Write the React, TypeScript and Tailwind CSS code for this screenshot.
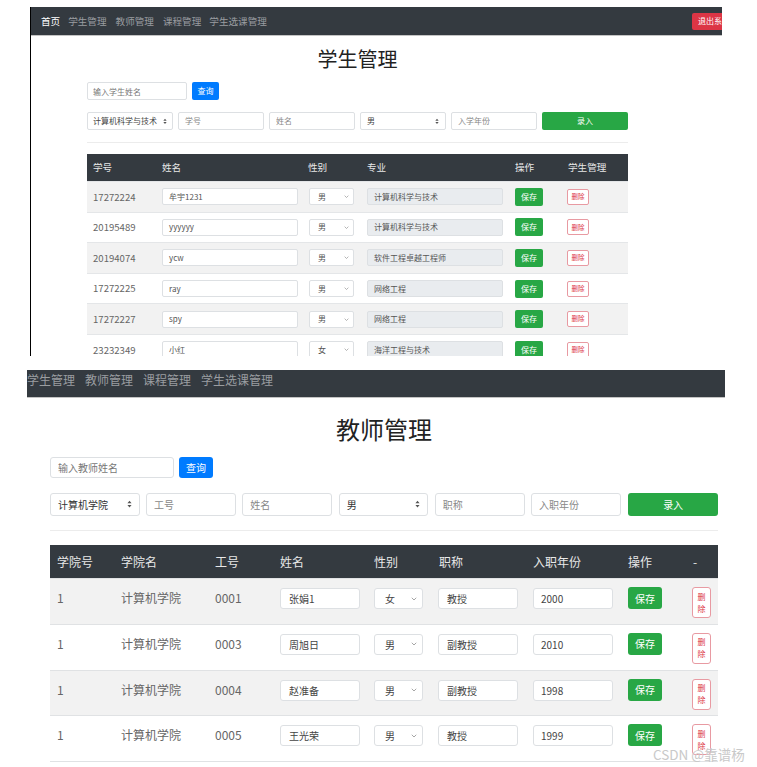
import React from 'react';

const students = [
    ['17272224', '牟宇1231', '男', '计算机科学与技术'],
    ['20195489', 'yyyyyy', '男', '计算机科学与技术'],
    ['20194074', 'ycw', '男', '软件工程卓越工程师'],
    ['17272225', 'ray', '男', '网络工程'],
    ['17272227', 'spy', '男', '网络工程'],
    ['23232349', '小红', '女', '海洋工程与技术'],
];

const teachers = [
    ['1', '计算机学院', '0001', '张娟1', '女', '教授', '2000'],
    ['1', '计算机学院', '0003', '周旭日', '男', '副教授', '2010'],
    ['1', '计算机学院', '0004', '赵准备', '男', '副教授', '1998'],
    ['1', '计算机学院', '0005', '王光荣', '男', '教授', '1999'],
];

function Chevron({ className }: { className?: string }) {
    return (
        <svg viewBox="0 0 8 5" className={className}>
            <path d="M1 1l3 3 3-3" fill="none" stroke="currentColor" strokeWidth="1" />
        </svg>
    );
}

function UpDown({ className }: { className?: string }) {
    return (
        <svg viewBox="0 0 6 10" className={className}>
            <path d="M3 1L5.5 4h-5zM3 9L0.5 6h5z" fill="currentColor" />
        </svg>
    );
}

function StudentPanel() {
    return (
        <div className="ml-[30px] mt-[7px] h-[349px] w-[692px] overflow-hidden border-l-[1.5px] border-black bg-white">
            {/* navbar */}
            <div className="flex h-[29px] items-center border-b border-[#c4c4c4] bg-[#343a40] pl-[10px] text-[9.6px]">
                <span className="text-white">首页</span>
                <span className="ml-[8px] text-[#9a9da0]">学生管理</span>
                <span className="ml-[9px] text-[#9a9da0]">教师管理</span>
                <span className="ml-[9px] text-[#9a9da0]">课程管理</span>
                <span className="ml-[8px] text-[#9a9da0]">学生选课管理</span>
                <div className="ml-auto mr-[-14px] flex h-[17px] shrink-0 items-center rounded-[2px] bg-[#dc3545] px-[6px] text-[8px] text-white">
                    退出系统
                </div>
            </div>

            <div className="ml-[56px] w-[541px]">
                <h1 className="mt-[9px] h-[28px] text-center text-[20px] leading-[28px] text-[#222]">学生管理</h1>

                <div className="mt-[9px] flex h-[18px] gap-[5px]">
                    <input
                        readOnly
                        placeholder="输入学生姓名"
                        className="h-full w-[100px] rounded-[2px] border border-[#dde0e3] px-[5px] text-[8px] outline-none placeholder:text-[#777]"
                    />
                    <div className="flex w-[27px] items-center justify-center rounded-[2px] bg-[#007bff] text-[8px] text-white">查询</div>
                </div>

                <div className="mt-[12px] flex h-[18px] gap-[5px] text-[8px]">
                    <div className="flex w-[86px] items-center rounded-[2px] border border-[#dde0e3] px-[5px] text-[#444]">
                        <span>计算机科学与技术</span>
                        <UpDown className="ml-auto w-[4px] text-[#555]" />
                    </div>
                    <input readOnly placeholder="学号" className="w-[86px] rounded-[2px] border border-[#dde0e3] px-[6px] outline-none placeholder:text-[#888]" />
                    <input readOnly placeholder="姓名" className="w-[86px] rounded-[2px] border border-[#dde0e3] px-[6px] outline-none placeholder:text-[#888]" />
                    <div className="flex w-[86px] items-center rounded-[2px] border border-[#dde0e3] px-[6px] text-[#444]">
                        <span>男</span>
                        <UpDown className="ml-auto w-[4px] text-[#555]" />
                    </div>
                    <input readOnly placeholder="入学年份" className="w-[86px] rounded-[2px] border border-[#dde0e3] px-[6px] outline-none placeholder:text-[#888]" />
                    <div className="flex w-[86px] items-center justify-center rounded-[2px] bg-[#28a745] text-white">录入</div>
                </div>

                <div className="mt-[12px] h-px bg-[#ececec]" />

                <div className="mt-[11px] text-[9.6px]">
                    <div className="grid h-[27px] grid-cols-[69px_146px_59px_148px_53px_66px] items-center bg-[#343a40] text-[#e8e8e8]">
                        <span className="pl-[6px]">学号</span>
                        <span className="pl-[6px]">姓名</span>
                        <span className="pl-[6px]">性别</span>
                        <span className="pl-[6px]">专业</span>
                        <span className="pl-[6px]">操作</span>
                        <span className="pl-[6px]">学生管理</span>
                    </div>
                    {students.map((s, i) => (
                        <div
                            key={s[0]}
                            className={`grid h-[30.6px] grid-cols-[69px_146px_59px_148px_53px_66px] items-center border-t border-[#e4e6e8] ${i % 2 === 0 ? 'bg-[#f2f2f2]' : 'bg-white'}`}
                        >
                            <span className="pl-[6px] text-[#666]">{s[0]}</span>
                            <div className="pl-[6px]">
                                <div className="flex h-[17px] w-[136px] items-center rounded-[2px] border border-[#dde0e3] bg-white px-[6px] text-[8px] text-[#555]">{s[1]}</div>
                            </div>
                            <div className="pl-[7px]">
                                <div className="flex h-[17px] w-[45px] items-center rounded-[2px] border border-[#dde0e3] bg-white pl-[8px] pr-[4px] text-[8px] text-[#555]">
                                    <span>{s[2]}</span>
                                    <Chevron className="ml-auto w-[5px] text-[#888]" />
                                </div>
                            </div>
                            <div className="pl-[6px]">
                                <div className="flex h-[17px] w-[136px] items-center rounded-[2px] border border-[#dde0e3] bg-[#e9ecef] px-[6px] text-[8px] text-[#555]">{s[3]}</div>
                            </div>
                            <div className="pl-[6px]">
                                <div className="flex h-[18px] w-[28px] items-center justify-center rounded-[2px] bg-[#28a745] text-[8px] text-white">保存</div>
                            </div>
                            <div className="pl-[5px]">
                                <div className="flex h-[16px] w-[22px] items-center justify-center rounded-[2px] border border-[#e89aa2] bg-white text-[6.5px] text-[#dc3545]">删除</div>
                            </div>
                        </div>
                    ))}
                </div>
            </div>
        </div>
    );
}

function TeacherPanel() {
    const cols = 'grid-cols-[64px_94px_65px_94px_65px_94px_95px_65px_32px]';
    return (
        <div className="ml-[27px] mt-[14px] h-[397px] w-[698px] overflow-hidden bg-white">
            <div className="flex h-[28px] items-start border-b border-[#c4c4c4] bg-[#343a40] pt-[1px] text-[12px] text-[#9a9da0]">
                <span>学生管理</span>
                <span className="ml-[10px]">教师管理</span>
                <span className="ml-[10px]">课程管理</span>
                <span className="ml-[10px]">学生选课管理</span>
            </div>

            <div className="ml-[23px] w-[668px]">
                <h1 className="mt-[15px] h-[32px] text-center text-[24px] leading-[32px] text-[#222]">教师管理</h1>

                <div className="mt-[12px] flex h-[21px] gap-[5px] text-[10px]">
                    <input
                        readOnly
                        placeholder="输入教师姓名"
                        className="h-full w-[124px] rounded-[3px] border border-[#dde0e3] px-[7px] outline-none placeholder:text-[#777]"
                    />
                    <div className="flex w-[34px] items-center justify-center rounded-[3px] bg-[#007bff] text-white">查询</div>
                </div>

                <div className="mt-[15px] flex h-[23px] gap-[6.3px] text-[10px]">
                    <div className="flex w-[90px] items-center rounded-[3px] border border-[#dde0e3] px-[7px] text-[#333]">
                        <span>计算机学院</span>
                        <UpDown className="ml-auto w-[5px] text-[#555]" />
                    </div>
                    <input readOnly placeholder="工号" className="w-[90px] rounded-[3px] border border-[#dde0e3] px-[7px] outline-none placeholder:text-[#888]" />
                    <input readOnly placeholder="姓名" className="w-[90px] rounded-[3px] border border-[#dde0e3] px-[7px] outline-none placeholder:text-[#888]" />
                    <div className="flex w-[90px] items-center rounded-[3px] border border-[#dde0e3] px-[7px] text-[#333]">
                        <span>男</span>
                        <UpDown className="ml-auto w-[5px] text-[#555]" />
                    </div>
                    <input readOnly placeholder="职称" className="w-[90px] rounded-[3px] border border-[#dde0e3] px-[7px] outline-none placeholder:text-[#888]" />
                    <input readOnly placeholder="入职年份" className="w-[90px] rounded-[3px] border border-[#dde0e3] px-[7px] outline-none placeholder:text-[#888]" />
                    <div className="ml-[1px] flex w-[90px] items-center justify-center rounded-[3px] bg-[#28a745] text-white">录入</div>
                </div>

                <div className="mt-[14px] h-px bg-[#ececec]" />

                <div className="mt-[14px] border-b border-[#e0e2e4] text-[12px]">
                    <div className={`grid h-[33px] ${cols} items-center bg-[#343a40] text-[#e8e8e8]`}>
                        <span className="pl-[7px]">学院号</span>
                        <span className="pl-[7px]">学院名</span>
                        <span className="pl-[7px]">工号</span>
                        <span className="pl-[7px]">姓名</span>
                        <span className="pl-[7px]">性别</span>
                        <span className="pl-[7px]">职称</span>
                        <span className="pl-[7px]">入职年份</span>
                        <span className="pl-[7px]">操作</span>
                        <span className="pl-[7px]">-</span>
                    </div>
                    {teachers.map((t, i) => (
                        <div
                            key={t[2]}
                            className={`grid h-[45.75px] ${cols} items-start border-t border-[#e0e2e4] pt-[8px] ${i % 2 === 0 ? 'bg-[#f2f2f2]' : 'bg-white'}`}
                        >
                            <span className="pl-[7px] pt-[1px] leading-[20px] text-[#666]">{t[0]}</span>
                            <span className="pl-[7px] pt-[1px] leading-[20px] text-[#666]">{t[1]}</span>
                            <span className="pl-[7px] pt-[1px] leading-[20px] text-[#666]">{t[2]}</span>
                            <div className="pl-[7px] pt-[1px]">
                                <div className="flex h-[21px] w-[80px] items-center rounded-[3px] border border-[#dde0e3] bg-white px-[8px] text-[10px] text-[#444]">{t[3]}</div>
                            </div>
                            <div className="pl-[7px] pt-[1px]">
                                <div className="flex h-[21px] w-[49px] items-center rounded-[3px] border border-[#dde0e3] bg-white pl-[10px] pr-[5px] text-[10px] text-[#444]">
                                    <span>{t[4]}</span>
                                    <Chevron className="ml-auto w-[6px] text-[#888]" />
                                </div>
                            </div>
                            <div className="pl-[6px] pt-[1px]">
                                <div className="flex h-[21px] w-[80px] items-center rounded-[3px] border border-[#dde0e3] bg-white px-[8px] text-[10px] text-[#444]">{t[5]}</div>
                            </div>
                            <div className="pl-[7px] pt-[1px]">
                                <div className="flex h-[21px] w-[80px] items-center rounded-[3px] border border-[#dde0e3] bg-white px-[7px] text-[10px] text-[#444]">{t[6]}</div>
                            </div>
                            <div className="pl-[7px]">
                                <div className="flex h-[22px] w-[34px] items-center justify-center rounded-[3px] bg-[#28a745] text-[10px] text-white">保存</div>
                            </div>
                            <div className="pl-[6px]">
                                <div className="flex h-[31px] w-[19px] flex-col items-center justify-center rounded-[3px] border border-[#e89aa2] bg-white text-[8px] leading-[12px] text-[#dc3545]">
                                    <span>删</span>
                                    <span>除</span>
                                </div>
                            </div>
                        </div>
                    ))}
                </div>
            </div>
        </div>
    );
}

export default function App() {
    return (
        <div className="relative h-[767px] w-[757px] overflow-hidden bg-white font-['Noto_Sans_CJK_SC','Liberation_Sans',sans-serif]">
            <div className="flex flex-col">
                <StudentPanel />
                <TeacherPanel />
            </div>
            <div className="absolute left-[653px] top-[744px] text-[13.5px] text-[#c9c9c9]">CSDN @靠谱杨</div>
        </div>
    );
}
